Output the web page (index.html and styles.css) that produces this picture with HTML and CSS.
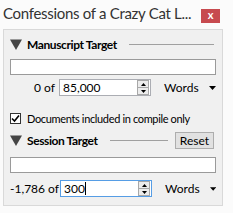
FILE: index.html
```html
<!DOCTYPE html>
<html>
<head>
<meta charset="utf-8">
<link rel="stylesheet" href="styles.css">
</head>
<body>
<div class="dock">
  <div class="titlebar">
    <span class="title">Confessions of a Crazy Cat L...</span>
    <div class="close">x</div>
  </div>
  <div class="panel">
    <div class="section-head">
      <svg class="tri" width="12" height="11" viewBox="0 0 12 11"><polygon points="0,0.5 12,0.5 6,11" fill="#454545"/></svg>
      <span class="head-label">Manuscript Target</span>
      <span class="rule"></span>
    </div>
    <div class="field"></div>
    <div class="count-row">
      <span class="count-label">0 of</span>
      <div class="spin">
        <span class="spin-text">85,000</span>
        <div class="spin-btns">
          <div class="spin-btn"><svg width="5" height="3" viewBox="0 0 5 3"><polygon points="2.5,0 5,3 0,3" fill="#000"/></svg></div>
          <div class="spin-btn"><svg width="5" height="3" viewBox="0 0 5 3"><polygon points="0,0 5,0 2.5,3" fill="#000"/></svg></div>
        </div>
      </div>
      <span class="unit">Words</span>
      <svg class="drop" width="7" height="4" viewBox="0 0 7 4"><polygon points="0,0 7,0 3.5,4" fill="#000"/></svg>
    </div>
    <div class="check-row">
      <span class="checkbox"><svg width="9" height="9" viewBox="0 0 9 9"><path d="M1 4.5 L3.5 7 L8 1.5" fill="none" stroke="#000" stroke-width="1.6"/></svg></span>
      <span class="check-label">Documents included in compile only</span>
    </div>
    <div class="section-head session">
      <svg class="tri" width="12" height="11" viewBox="0 0 12 11"><polygon points="0,0.5 12,0.5 6,11" fill="#454545"/></svg>
      <span class="head-label">Session Target</span>
      <span class="rule short"></span>
      <div class="reset">Reset</div>
    </div>
    <div class="field field-2"></div>
    <div class="count-row row-2">
      <span class="count-label wide">-1,786 of</span>
      <div class="spin focus">
        <span class="spin-text">300<span class="caret"></span></span>
        <div class="spin-btns">
          <div class="spin-btn"><svg width="5" height="3" viewBox="0 0 5 3"><polygon points="2.5,0 5,3 0,3" fill="#000"/></svg></div>
          <div class="spin-btn"><svg width="5" height="3" viewBox="0 0 5 3"><polygon points="0,0 5,0 2.5,3" fill="#000"/></svg></div>
        </div>
      </div>
      <span class="unit">Words</span>
      <svg class="drop" width="7" height="4" viewBox="0 0 7 4"><polygon points="0,0 7,0 3.5,4" fill="#000"/></svg>
    </div>
  </div>
</div>
</body>
</html>
```

FILE: styles.css
```css
html, body {
  margin: 0;
  padding: 0;
}
body {
  width: 233px;
  height: 213px;
  overflow: hidden;
  background: #fbfbfb;
  font-family: Lato, "Liberation Sans", sans-serif;
  font-size: 12px;
  color: #000;
}
.titlebar {
  height: 29px;
  display: flex;
  padding-left: 3px;
}
.title {
  flex: 1;
  min-width: 0;
  font-size: 15px;
  letter-spacing: -0.3px;
  line-height: 26px;
  color: #333;
  white-space: nowrap;
  overflow: hidden;
}
.close {
  flex: none;
  width: 19px;
  height: 14px;
  margin-top: 9px;
  margin-right: 13px;
  background: #c74a4f;
  color: #fff;
  font-weight: bold;
  font-size: 11px;
  line-height: 12px;
  text-align: center;
}
.panel {
  margin-left: 3px;
  width: 220px;
  box-sizing: border-box;
  border: 1px solid #d9d9d9;
  background: #f0f0f0;
  padding: 6px 6px 8px 6px;
}
.section-head {
  display: flex;
  align-items: center;
  height: 16px;
}
.section-head.session {
  height: 17px;
  margin-top: 7px;
}
.tri {
  flex: none;
  margin-right: 5px;
}
.head-label {
  font-weight: bold;
  letter-spacing: -0.4px;
  white-space: nowrap;
}
.rule {
  flex: 1;
  height: 1px;
  background: #a0a0a0;
  margin-left: 12px;
  margin-right: 2px;
}
.rule.short {
  margin-right: 7px;
}
.reset {
  flex: none;
  width: 39px;
  height: 17px;
  box-sizing: border-box;
  border: 1px solid #adadad;
  background: #e1e1e1;
  text-align: center;
  line-height: 15px;
  margin-right: 2px;
}
.field {
  height: 16px;
  box-sizing: border-box;
  border: 1px solid #9a9a9a;
  background: #fff;
  margin-top: 7px;
}
.field-2 {
  margin-top: 8px;
}
.count-row {
  display: flex;
  align-items: center;
  height: 17px;
  margin-top: 4px;
}
.row-2 {
  margin-top: 7px;
}
.count-label {
  flex: none;
  width: 45px;
  text-align: right;
  white-space: nowrap;
  margin-right: 4px;
}
.count-label.wide {
  width: 47px;
  margin-right: 3px;
}
.spin {
  flex: none;
  width: 92px;
  height: 17px;
  box-sizing: border-box;
  border: 1px solid #abadb3;
  background: #fff;
  display: flex;
  align-items: center;
  padding-left: 3px;
}
.spin.focus {
  border-color: #569de5;
}
.spin-text {
  flex: 1;
  display: flex;
  align-items: center;
  white-space: nowrap;
}
.caret {
  display: inline-block;
  width: 1px;
  height: 13px;
  background: #000;
}
.spin-btns {
  width: 12px;
  height: 15px;
  box-sizing: border-box;
  border: 1px solid #a8a8a8;
  background: #ececec;
  display: flex;
  flex-direction: column;
  margin-right: 1px;
}
.spin-btn {
  flex: 1;
  display: flex;
  align-items: center;
  justify-content: center;
}
.spin-btn + .spin-btn {
  border-top: 1px solid #a8a8a8;
}
.unit {
  margin-left: 13px;
}
.drop {
  margin-left: 10px;
}
.check-row {
  display: flex;
  align-items: center;
  height: 14px;
  margin-top: 15px;
}
.checkbox {
  flex: none;
  width: 11px;
  height: 11px;
  box-sizing: border-box;
  border: 1px solid #333;
  background: #fff;
  display: flex;
  align-items: center;
  justify-content: center;
  margin-right: 6px;
}
.check-label {
  white-space: nowrap;
  font-size: 11px;
  letter-spacing: -0.35px;
}
```
